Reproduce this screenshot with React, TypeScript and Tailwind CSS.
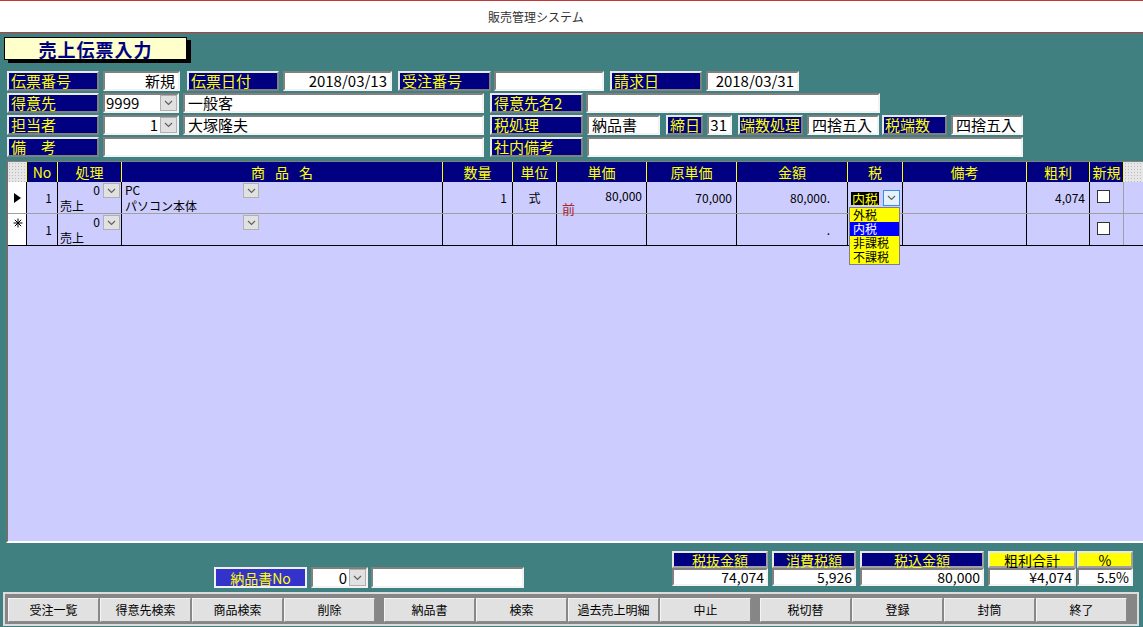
import React from "react";

type P = { className?: string; children?: React.ReactNode };

function Chevron() {
  return (
    <svg width="9" height="6" viewBox="0 0 9 6" className="block">
      <polyline points="1,1 4.5,4.5 8,1" fill="none" stroke="#606060" strokeWidth="1.2" />
    </svg>
  );
}

function DropBtn({ className = "" }: P) {
  return (
    <div className={`shrink-0 flex items-center justify-center bg-[#e1e1e1] border border-[#b0b0b0] ${className}`}>
      <Chevron />
    </div>
  );
}

function Label({ className = "", children }: P) {
  return (
    <div
      className={`shrink-0 bg-[#000080] text-[#ffff00] text-[15px] leading-[16px] border-2 border-t-[#e8e8e8] border-l-[#e8e8e8] border-r-[#808080] border-b-[#808080] whitespace-nowrap overflow-hidden flex items-center ${className}`}
    >
      {children}
    </div>
  );
}

function Box({ className = "", children }: P) {
  return (
    <div
      className={`shrink-0 bg-white text-black text-[15px] leading-[16px] border-2 border-t-[#808080] border-l-[#808080] border-r-[#f2f2f2] border-b-[#f2f2f2] px-[3px] whitespace-nowrap overflow-hidden flex items-center ${className}`}
    >
      {children}
    </div>
  );
}

function Combo({ className = "", value, right }: { className?: string; value: string; right?: boolean }) {
  return (
    <div
      className={`shrink-0 bg-white text-black text-[15px] leading-[16px] border-2 border-t-[#808080] border-l-[#808080] border-r-[#f2f2f2] border-b-[#f2f2f2] flex items-stretch ${className}`}
    >
      <div className={`flex-1 flex items-center px-[1px] ${right ? "justify-end pr-[2px]" : ""}`}>{value}</div>
      <DropBtn className="w-[17px]" />
    </div>
  );
}

function HCell({ className = "", children }: P) {
  return (
    <div className={`shrink-0 h-full border-r border-[#ffff00] flex items-center justify-center ${className}`}>
      {children}
    </div>
  );
}

function Check() {
  return <div className="w-[13px] h-[13px] bg-white border border-[#333]" />;
}

function Total({ className = "", head, value, yellow }: { className?: string; head: string; value: string; yellow?: boolean }) {
  return (
    <div className={`shrink-0 flex flex-col ${className}`}>
      <div
        className={`h-[17px] border-2 border-t-[#e8e8e8] border-l-[#e8e8e8] border-r-[#a0a0a0] border-b-[#a0a0a0] flex items-center justify-center text-[14px] leading-none ${
          yellow ? "bg-[#ffff00] text-black" : "bg-[#000080] text-[#ffff00]"
        }`}
      >
        {head}
      </div>
      <div className="h-[18px] bg-white border-2 border-t-[#808080] border-l-[#808080] border-r-[#f2f2f2] border-b-[#f2f2f2] flex items-center justify-end pr-[2px] text-[14px] leading-none text-black">
        {value}
      </div>
    </div>
  );
}

function Btn({ children }: P) {
  return (
    <div className="w-[91px] h-[24px] shrink-0 bg-[#e1e1e1] border border-t-[#f4f4f4] border-l-[#f4f4f4] border-r-[#8a8a8a] border-b-[#8a8a8a] flex items-center justify-center text-[12px] text-black leading-none">
      {children}
    </div>
  );
}

export default function App() {
  return (
    <div className="w-[1143px] h-[627px] overflow-hidden bg-[#408080] font-['Noto_Sans_CJK_JP',sans-serif] flex flex-col">
      {/* window title */}
      <div className="h-[33px] shrink-0 bg-white border-y border-[#c23b3b] flex items-center pl-[488px] text-[12px] text-[#333]">
        販売管理システム
      </div>

      {/* form title */}
      <div className="mt-[4px] ml-[4px] w-[183px] h-[23px] shrink-0 bg-[#ffffcc] border border-black shadow-[4px_3px_0_#000] flex items-center justify-center text-[18px] font-bold text-[#000080] tracking-[1px] leading-none">
        売上伝票入力
      </div>

      {/* header form */}
      <div className="mt-[11px] flex flex-col gap-[2px] shrink-0">
        <div className="flex h-[20px] pl-[7px]">
          <Label className="w-[92px] pl-[2px]">伝票番号</Label>
          <Box className="ml-[4px] w-[77px] justify-end">新規</Box>
          <Label className="ml-[7px] w-[92px] pl-[2px]">伝票日付</Label>
          <Box className="ml-[4px] w-[109px] justify-end">2018/03/13</Box>
          <Label className="ml-[6px] w-[93px] pl-[2px]">受注番号</Label>
          <Box className="ml-[3px] w-[110px]" />
          <Label className="ml-[6px] w-[92px] pl-[2px]">請求日</Label>
          <Box className="ml-[4px] w-[93px] justify-end">2018/03/31</Box>
        </div>
        <div className="flex h-[20px] pl-[7px]">
          <Label className="w-[92px] pl-[2px]">得意先</Label>
          <Combo className="ml-[4px] w-[76px]" value="9999" />
          <Box className="ml-[4px] w-[301px]">一般客</Box>
          <Label className="ml-[6px] w-[93px] pl-[2px]">得意先名2</Label>
          <Box className="ml-[3px] w-[294px]" />
        </div>
        <div className="flex h-[20px] pl-[7px]">
          <Label className="w-[92px] pl-[2px]">担当者</Label>
          <Combo className="ml-[4px] w-[76px]" value="1" right />
          <Box className="ml-[4px] w-[301px]">大塚隆夫</Box>
          <Label className="ml-[6px] w-[93px] pl-[2px]">税処理</Label>
          <Box className="ml-[4px] w-[73px]">納品書</Box>
          <Label className="ml-[6px] w-[37px] pl-[2px]">締日</Label>
          <Box className="ml-[4px] w-[25px] justify-end">31</Box>
          <Label className="ml-[6px] w-[65px]">端数処理</Label>
          <Box className="ml-[4px] w-[72px]">四捨五入</Box>
          <Label className="ml-[3px] w-[65px] pl-[1px]">税端数</Label>
          <Box className="ml-[4px] w-[72px]">四捨五入</Box>
        </div>
        <div className="flex h-[20px] pl-[7px]">
          <Label className="w-[92px] pl-[2px]">備　考</Label>
          <Box className="ml-[4px] w-[381px]" />
          <Label className="ml-[6px] w-[93px] pl-[2px]">社内備考</Label>
          <Box className="ml-[4px] w-[436px]" />
        </div>
      </div>

      {/* grid */}
      <div className="mt-[4px] ml-[6px] w-[1137px] h-[382px] shrink-0 bg-[#ccccff] border-t border-l-2 border-b-2 border-t-[#808080] border-l-[#707070] border-b-white flex flex-col text-[12px] text-black overflow-hidden">
        <div className="h-[20px] shrink-0 flex bg-[#000080] text-[#ffff00] text-[14px] leading-none">
          <div className="w-[19px] shrink-0 h-full border-r border-[#ffff00] bg-[#e6e6e6] bg-[radial-gradient(circle,#bcbcbc_0.7px,transparent_0.9px)] bg-[length:3px_3px]" />
          <HCell className="w-[31px]">No</HCell>
          <HCell className="w-[64px]">処理</HCell>
          <HCell className="w-[321px] gap-[10px]">
            <span>商</span>
            <span>品</span>
            <span>名</span>
          </HCell>
          <HCell className="w-[70px]">数量</HCell>
          <HCell className="w-[44px]">単位</HCell>
          <HCell className="w-[90px]">単価</HCell>
          <HCell className="w-[90px]">原単価</HCell>
          <HCell className="w-[111px]">金額</HCell>
          <HCell className="w-[55px]">税</HCell>
          <HCell className="w-[124px]">備考</HCell>
          <HCell className="w-[63px]">粗利</HCell>
          <HCell className="w-[34px]">新規</HCell>
          <div className="flex-1 h-full bg-[#e6e6e6] bg-[radial-gradient(circle,#bcbcbc_0.7px,transparent_0.9px)] bg-[length:3px_3px]" />
        </div>

        {/* row 1 */}
        <div className="h-[32px] shrink-0 flex border-b border-[#a0a0a0] leading-[14px]">
          <div className="w-[19px] shrink-0 bg-white border-r border-black flex items-center pl-[6px]">
            <svg width="7" height="10" viewBox="0 0 7 10" className="block">
              <polygon points="0,0 7,5 0,10" fill="#000" />
            </svg>
          </div>
          <div className="w-[31px] shrink-0 border-r border-black flex items-center justify-end pr-[5px]">1</div>
          <div className="w-[64px] shrink-0 border-r border-black flex flex-col">
            <div className="h-[18px] flex justify-end items-start pt-[1px] pr-[1px]">
              <span className="pr-[3px]">0</span>
              <DropBtn className="w-[17px] h-[15px]" />
            </div>
            <div className="pl-[2px]">売上</div>
          </div>
          <div className="w-[321px] shrink-0 border-r border-black flex flex-col">
            <div className="h-[18px] w-[137px] flex justify-between items-start pt-[1px]">
              <span className="pl-[3px]">PC</span>
              <DropBtn className="w-[16px] h-[15px]" />
            </div>
            <div className="pl-[3px]">パソコン本体</div>
          </div>
          <div className="w-[70px] shrink-0 border-r border-black flex items-center justify-end pr-[5px]">1</div>
          <div className="w-[44px] shrink-0 border-r border-black flex items-center justify-center">式</div>
          <div className="w-[90px] shrink-0 border-r border-black flex flex-col pt-[7px]">
            <div className="h-[13px] leading-[13px] text-right pr-[4px]">80,000</div>
            <div className="h-[12px] leading-[13px] pl-[5px] text-[13px] text-[#a82828]">前</div>
          </div>
          <div className="w-[90px] shrink-0 border-r border-black flex items-center justify-end pr-[4px]">70,000</div>
          <div className="w-[111px] shrink-0 border-r border-black flex items-center justify-end pr-[17px]">80,000.</div>
          <div className="w-[55px] shrink-0 border-r border-black relative flex items-start pt-[8px] pl-[3px]">
            <div className="mt-[2px] h-[13px] px-[1px] bg-black text-[#ffff00] text-[13px] leading-[13px]">内税</div>
            <div className="ml-[4px] w-[17px] h-[16px] bg-[#e5f1fb] border border-[#3c8ce6] flex items-center justify-center">
              <Chevron />
            </div>
            <div className="absolute left-[1px] top-[25px] z-10 w-[51px] bg-[#ffff00] border border-[#808080] flex flex-col text-[12px] leading-[14px] text-black">
              <div className="h-[14px] pl-[3px]">外税</div>
              <div className="h-[14px] pl-[3px] bg-[#0000ff] text-white">内税</div>
              <div className="h-[14px] pl-[3px]">非課税</div>
              <div className="h-[14px] pl-[3px]">不課税</div>
            </div>
          </div>
          <div className="w-[124px] shrink-0 border-r border-black" />
          <div className="w-[63px] shrink-0 border-r border-black flex items-center justify-end pr-[4px]">4,074</div>
          <div className="w-[34px] shrink-0 border-r border-[#a0a0a0] pl-[7px] pt-[8px]">
            <Check />
          </div>
          <div className="flex-1" />
        </div>

        {/* row 2 */}
        <div className="h-[32px] shrink-0 flex border-b border-black leading-[14px]">
          <div className="w-[19px] shrink-0 bg-white border-r border-black flex items-start pl-[5px] pt-[4px]">
            <svg width="10" height="10" viewBox="0 0 10 10" className="block">
              <g stroke="#000" strokeWidth="1">
                <line x1="5" y1="0.5" x2="5" y2="9.5" />
                <line x1="0.5" y1="5" x2="9.5" y2="5" />
                <line x1="1.8" y1="1.8" x2="8.2" y2="8.2" />
                <line x1="8.2" y1="1.8" x2="1.8" y2="8.2" />
              </g>
            </svg>
          </div>
          <div className="w-[31px] shrink-0 border-r border-black flex items-center justify-end pr-[5px]">1</div>
          <div className="w-[64px] shrink-0 border-r border-black flex flex-col">
            <div className="h-[18px] flex justify-end items-start pt-[1px] pr-[1px]">
              <span className="pr-[3px]">0</span>
              <DropBtn className="w-[17px] h-[15px]" />
            </div>
            <div className="pl-[2px]">売上</div>
          </div>
          <div className="w-[321px] shrink-0 border-r border-black flex flex-col">
            <div className="h-[18px] w-[137px] flex justify-end items-start pt-[1px]">
              <DropBtn className="w-[16px] h-[15px]" />
            </div>
          </div>
          <div className="w-[70px] shrink-0 border-r border-black" />
          <div className="w-[44px] shrink-0 border-r border-black" />
          <div className="w-[90px] shrink-0 border-r border-black" />
          <div className="w-[90px] shrink-0 border-r border-black" />
          <div className="w-[111px] shrink-0 border-r border-black flex items-center justify-end pr-[17px]">.</div>
          <div className="w-[55px] shrink-0 border-r border-black" />
          <div className="w-[124px] shrink-0 border-r border-black" />
          <div className="w-[63px] shrink-0 border-r border-black" />
          <div className="w-[34px] shrink-0 border-r border-[#a0a0a0] pl-[7px] pt-[8px]">
            <Check />
          </div>
          <div className="flex-1" />
        </div>
        <div className="flex-1" />
      </div>

      {/* bottom info */}
      <div className="h-[49px] shrink-0 flex items-start">
        <div className="ml-[214px] mt-[24px] h-[21px] flex">
          <div className="w-[93px] shrink-0 bg-[#3333cc] border-2 border-[#f0f0f0] text-[#ffff00] text-[14px] flex items-center justify-center leading-none">
            納品書No
          </div>
          <Combo className="ml-[4px] w-[57px]" value="0" right />
          <Box className="ml-[3px] w-[153px]" />
        </div>
        <div className="ml-[148px] mt-[8px] flex">
          <Total className="w-[96px]" head="税抜金額" value="74,074" />
          <Total className="ml-[4px] w-[84px]" head="消費税額" value="5,926" />
          <Total className="ml-[4px] w-[124px]" head="税込金額" value="80,000" />
          <Total className="ml-[4px] w-[88px]" head="粗利合計" value="¥4,074" yellow />
          <Total className="ml-[1px] w-[56px]" head="%" value="5.5%" yellow />
        </div>
      </div>

      {/* button bar */}
      <div className="ml-[3px] w-[1136px] h-[34px] shrink-0 bg-[#868686] border-2 border-[#dcdcdc] pt-[4px] pl-[3px] flex">
        <div className="flex gap-[1px]">
          <Btn>受注一覧</Btn>
          <Btn>得意先検索</Btn>
          <Btn>商品検索</Btn>
          <Btn>削除</Btn>
        </div>
        <div className="ml-[9px] flex gap-[1px]">
          <Btn>納品書</Btn>
          <Btn>検索</Btn>
          <Btn>過去売上明細</Btn>
          <Btn>中止</Btn>
        </div>
        <div className="ml-[9px] flex gap-[1px]">
          <Btn>税切替</Btn>
          <Btn>登録</Btn>
          <Btn>封筒</Btn>
          <Btn>終了</Btn>
        </div>
      </div>
    </div>
  );
}
